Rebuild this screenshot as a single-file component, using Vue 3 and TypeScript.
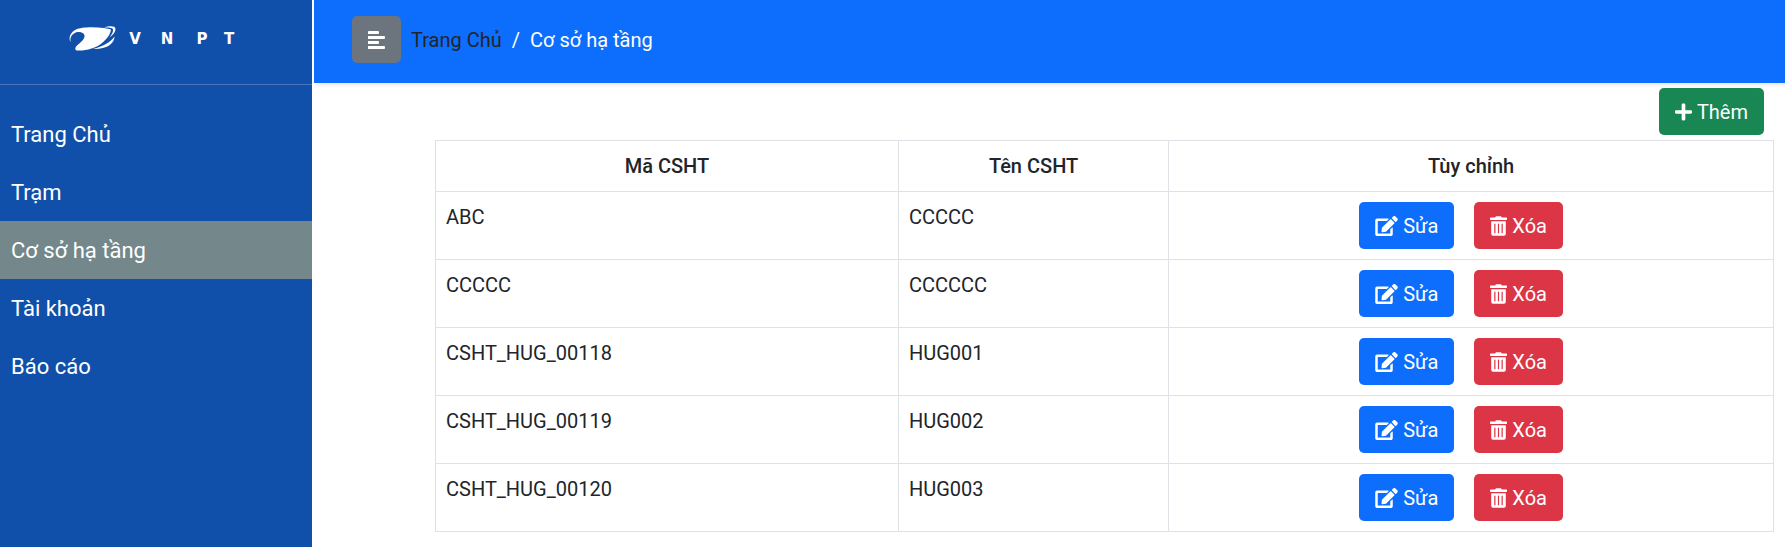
<script setup lang="ts">
import { ref } from 'vue'

interface Facility {
  code: string
  name: string
}

const menu: string[] = ['Trang Chủ', 'Trạm', 'Cơ sở hạ tầng', 'Tài khoản', 'Báo cáo']
const active = ref('Cơ sở hạ tầng')

const facilities = ref<Facility[]>([
  { code: 'ABC', name: 'CCCCC' },
  { code: 'CCCCC', name: 'CCCCCC' },
  { code: 'CSHT_HUG_00118', name: 'HUG001' },
  { code: 'CSHT_HUG_00119', name: 'HUG002' },
  { code: 'CSHT_HUG_00120', name: 'HUG003' },
])
</script>

<template>
  <div class="layout">
    <aside class="sidebar">
      <div class="brand">
        <svg class="logo" viewBox="0 0 174 28" role="img" aria-label="VNPT">
          <path d="M2.500 17 C0 12 3 7 8 4.500 C13 2 25 1.500 36 3 C39 3.500 42 4 43 4.500 C42.500 9 39 14 34 18 C28 23 18 26 9 25.500 C6.500 25 7 22.500 9 20.500 C13 17 17 14 16.500 10.500 C16 7 10 6 6 8.500 C3 10.500 2 13 2.500 17 Z" />
          <path d="M36 2.500 C41 1 47.500 0.500 47.500 4 C47.500 7 45 10 41.500 12.500 C44 9 45.500 6.500 45 4.500 C44.500 2.500 40 2.500 36 2.500 Z" />
          <path d="M46.500 11.500 C46.500 19 38 24.500 25 24 C35 21.500 42 17.500 46.500 11.500 Z" />
          <text y="18.500" x="67 99 134 161">VNPT</text>
        </svg>
      </div>
      <nav class="menu">
        <a
          v-for="item in menu"
          :key="item"
          href="#"
          :class="{ active: item === active }"
          @click.prevent="active = item"
        >{{ item }}</a>
      </nav>
    </aside>

    <div class="page">
      <header class="topbar">
        <button type="button" class="btn toggle" aria-label="Menu">
          <svg class="icon-lines" viewBox="0 0 17 18">
            <path d="M1 0h9a1 1 0 0 1 1 1v1a1 1 0 0 1-1 1H0V1a1 1 0 0 1 1-1zM0 5h16a1 1 0 0 1 1 1v1a1 1 0 0 1-1 1H0zM0 10h10a1 1 0 0 1 1 1v1a1 1 0 0 1-1 1H0zM0 15h16a1 1 0 0 1 1 1v1a1 1 0 0 1-1 1H0z" />
          </svg>
        </button>
        <nav class="crumbs">
          <a href="#">Trang Chủ</a>
          <span>/</span>
          <span>Cơ sở hạ tầng</span>
        </nav>
      </header>

      <main class="content">
        <div class="actions">
          <button type="button" class="btn add">
            <svg class="icon-plus" viewBox="0 0 448 512">
              <path d="M416 208H272V64c0-17.670-14.330-32-32-32h-32c-17.670 0-32 14.330-32 32v144H32c-17.670 0-32 14.330-32 32v32c0 17.670 14.330 32 32 32h144v144c0 17.670 14.330 32 32 32h32c17.670 0 32-14.330 32-32V304h144c17.670 0 32-14.330 32-32v-32c0-17.670-14.330-32-32-32z" />
            </svg>
            Thêm
          </button>
        </div>
        <table>
          <colgroup>
            <col class="col-code" />
            <col class="col-name" />
            <col />
          </colgroup>
          <thead>
            <tr>
              <th scope="col">Mã CSHT</th>
              <th scope="col">Tên CSHT</th>
              <th scope="col">Tùy chỉnh</th>
            </tr>
          </thead>
          <tbody>
            <tr v-for="row in facilities" :key="row.code">
              <td>{{ row.code }}</td>
              <td>{{ row.name }}</td>
              <td>
                <div class="row-actions">
                  <button type="button" class="btn edit">
                    <svg class="icon-edit" viewBox="0 0 576 512">
                      <path d="M402.600 83.200l90.200 90.200c3.800 3.800 3.800 10 0 13.800L274.400 405.600l-92.800 10.300c-12.400 1.400-22.900-9.100-21.500-21.500l10.300-92.800L388.800 83.200c3.800-3.800 10-3.800 13.800 0zm162-22.900l-48.800-48.800c-15.200-15.200-39.900-15.200-55.200 0l-35.400 35.400c-3.800 3.800-3.800 10 0 13.800l90.200 90.200c3.800 3.800 10 3.800 13.800 0l35.400-35.400c15.200-15.300 15.200-40 0-55.200zM384 346.200V448H64V128h229.800c3.200 0 6.200-1.300 8.500-3.500l40-40c7.600-7.600 2.200-20.500-8.500-20.500H48C21.500 64 0 85.500 0 112v352c0 26.500 21.500 48 48 48h352c26.500 0 48-21.500 48-48V306.200c0-10.700-12.900-16-20.500-8.500l-40 40c-2.200 2.300-3.500 5.300-3.500 8.500z" />
                    </svg>
                    Sửa
                  </button>
                  <button type="button" class="btn delete">
                    <svg class="icon-trash" viewBox="0 0 448 512">
                      <path d="M32 464a48 48 0 0 0 48 48h288a48 48 0 0 0 48-48V128H32zm272-256a16 16 0 0 1 32 0v224a16 16 0 0 1-32 0zm-96 0a16 16 0 0 1 32 0v224a16 16 0 0 1-32 0zm-96 0a16 16 0 0 1 32 0v224a16 16 0 0 1-32 0zM432 32H312l-9.400-18.700A24 24 0 0 0 281.100 0H166.800a23.720 23.720 0 0 0-21.400 13.300L136 32H16A16 16 0 0 0 0 48v32a16 16 0 0 0 16 16h416a16 16 0 0 0 16-16V48a16 16 0 0 0-16-16z" />
                    </svg>
                    Xóa
                  </button>
                </div>
              </td>
            </tr>
          </tbody>
        </table>
      </main>
    </div>
  </div>
</template>

<style>
body {
  margin: 0;
  background: #fff;
}
</style>

<style scoped>
.layout {
  display: flex;
  min-height: 100vh;
  gap: 2px;
  color: #212529;
  font-family: Roboto, "Liberation Sans", sans-serif;
  font-size: 20px;
  line-height: 30px;
}

.sidebar {
  position: relative;
  flex: 0 0 312px;
  background: #1150aa;
}

.brand {
  display: flex;
  box-sizing: border-box;
  height: 85px;
  padding: 25px 0 0 68px;
  border-bottom: 1px solid #4774bb;
}

.logo {
  width: 174px;
  height: 28px;
  fill: #fff;
}

.logo text {
  font: bold 15px "DejaVu Sans", sans-serif;
  text-anchor: middle;
}

.menu {
  display: flex;
  flex-direction: column;
  padding-top: 20px;
}

.menu a {
  padding: 15px 11px 13px;
  color: #fff;
  font-size: 22px;
  text-decoration: none;
}

.menu a.active {
  background: #74878b;
}

.page {
  flex: 1;
  min-width: 0;
}

.topbar {
  display: flex;
  align-items: center;
  gap: 10px;
  box-sizing: border-box;
  height: 83px;
  padding: 0 38px 4px;
  background: #0d6efd;
  box-shadow: 2px 2px 4px rgba(0, 0, 0, 0.1);
}

.crumbs {
  display: flex;
  gap: 10px;
  color: #fff;
}

.crumbs a {
  color: #212529;
  text-decoration: none;
}

.btn {
  display: inline-flex;
  align-items: center;
  gap: 5px;
  padding: 8px 16px;
  min-height: 47px;
  border: 0;
  border-radius: 5px;
  color: #fff;
  font: inherit;
  cursor: pointer;
}

.btn svg {
  fill: currentColor;
}

.toggle {
  background: #6c757d;
}

.add {
  background: #198754;
}

.edit {
  background: #0d6efd;
}

.delete {
  background: #dc3545;
}

.icon-lines {
  width: 17px;
  height: 18px;
}

.icon-plus,
.icon-trash {
  width: 17px;
  height: 20px;
}

.icon-edit {
  width: 23px;
  height: 20px;
}

.content {
  padding: 5px 11px 0 121px;
}

.actions {
  display: flex;
  justify-content: flex-end;
  padding: 0 10px 5px 0;
}

table {
  width: 100%;
  table-layout: fixed;
  border-collapse: collapse;
}

.col-code {
  width: 34.600%;
}

.col-name {
  width: 20.200%;
}

th,
td {
  padding: 10px;
  border: 1px solid #dee2e6;
  text-align: left;
  vertical-align: top;
}

th {
  font-weight: 500;
  text-align: center;
}

.row-actions {
  display: flex;
  justify-content: center;
  gap: 20px;
  padding-right: 20px;
}
</style>
